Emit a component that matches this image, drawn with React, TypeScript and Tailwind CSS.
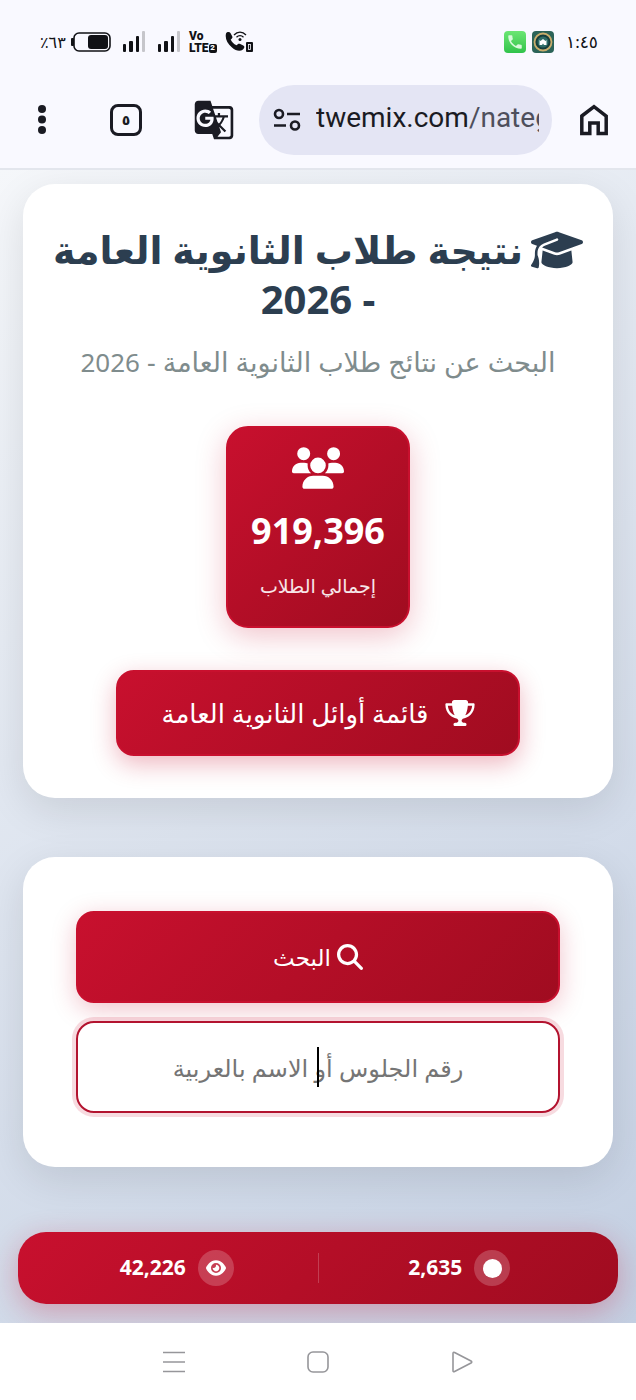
import { useState } from "react";
import { FaEye, FaGraduationCap, FaMagnifyingGlass, FaTrophy, FaUsers } from "react-icons/fa6";
import { MdGTranslate, MdPhone } from "react-icons/md";

const SignalBars = () => (
    <svg width="23" height="22" viewBox="0 0 23 22" aria-hidden="true">
        <rect x="0" y="13" width="3" height="8" rx="1" fill="#111216" />
        <rect x="6" y="10" width="4" height="11" rx="1" fill="#111216" />
        <rect x="13" y="5" width="3" height="16" rx="1" fill="#111216" />
        <rect x="19" y="0" width="3" height="21" rx="1" fill="#c6c6cb" />
    </svg>
);

const Battery = () => (
    <svg width="40" height="22" viewBox="0 0 40 22" aria-hidden="true">
        <rect x="0" y="7" width="3" height="8" rx="1" fill="#111216" />
        <rect x="3" y="2" width="36" height="18" rx="5" fill="none" stroke="#111216" strokeWidth="1.6" />
        <rect x="17" y="4" width="20" height="14" rx="3" fill="#111216" />
    </svg>
);

const WifiCall = () => (
    <svg width="28" height="22" viewBox="0 0 28 22" aria-hidden="true">
        <path d="M1 2.500C2 .8 4.600.6 5.600 2.200l1.700 3.200c.5 1.200-.1 1.900-1.600 3 1 2.400 3 4.500 5.800 5.900 1.200-1.500 2.100-1.900 3.200-1.500l3.600 1.700c1.500.8 1.500 2.200-.3 3.900C15 20.800 11 19.900 7 16.500 2 12.200-.1 7 1 2.500z" fill="#111216" />
        <path d="M9 4c3.500-3.800 8.500-3.800 12 0M11.500 6.200c2-2 5-2 7 0" fill="none" stroke="#111216" strokeWidth="1.300" />
        <circle cx="15" cy="8.500" r="1.500" fill="#111216" />
        <rect x="21" y="11" width="7" height="10" rx="1" fill="#111216" />
        <rect x="23.500" y="13.500" width="2" height="5" fill="none" stroke="#f9f9ff" strokeWidth=".8" />
    </svg>
);

const MosqueIcon = () => (
    <svg width="22" height="22" viewBox="0 0 22 22" aria-hidden="true">
        <rect width="22" height="22" rx="4" fill="#2b6358" />
        <circle cx="11" cy="11" r="8.500" fill="#173f3d" stroke="#c9ad6c" strokeWidth="1.800" />
        <circle cx="11" cy="11" r="5.500" fill="#2f6d68" />
        <path d="M7.500 14V9l1 1 2.500-2 2.500 2 1-1v5h-2.500l-1-1.500-1 1.500z" fill="#fff" />
    </svg>
);

const StatusBar = () => (
    <div className="flex h-[84px] items-center justify-between pl-10 pr-[38px] text-[#111216]" dir="ltr">
        <div className="flex items-center">
            <span className="w-[31px] whitespace-nowrap text-[16px]">٪٦٣</span>
            <Battery />
            <span className="ml-3"><SignalBars /></span>
            <span className="ml-3"><SignalBars /></span>
            <span className="ml-2 flex flex-col font-['Roboto',sans-serif] text-[12px] font-black leading-[12px]">
                <span>Vo</span>
                <span className="flex items-center">
                    LTE
                    <span className="flex h-[9px] w-2 items-center justify-center rounded-xs bg-[#111216] text-[8px] leading-none text-white">2</span>
                </span>
            </span>
            <span className="ml-2"><WifiCall /></span>
        </div>
        <div className="flex items-center">
            <span className="flex size-[22px] items-center justify-center rounded bg-linear-to-b from-[#6be673] to-[#2fc34b] text-[#d9f9dc]">
                <MdPhone size={18} />
            </span>
            <span className="ml-[6px]"><MosqueIcon /></span>
            <span className="ml-3 text-[17px]">١:٤٥</span>
        </div>
    </div>
);

const Toolbar = () => (
    <div className="flex h-[86px] items-center border-b-2 border-[#e3e6ed] px-[22px] pb-[13px] text-[#1a1b23]" dir="ltr">
        <button className="flex w-10 justify-center" aria-label="القائمة">
            <svg width="10" height="30" viewBox="0 0 10 30">
                <circle cx="5" cy="4" r="4" fill="currentColor" />
                <circle cx="5" cy="14.500" r="4" fill="currentColor" />
                <circle cx="5" cy="25" r="4" fill="currentColor" />
            </svg>
        </button>
        <button className="ml-11 flex w-10 justify-center" aria-label="علامات التبويب">
            <span className="flex size-8 items-center justify-center rounded-lg border-3 border-current text-[14px] font-bold">٥</span>
        </button>
        <button className="ml-12 flex w-10 justify-center" aria-label="ترجمة">
            <MdGTranslate size={42} className="shrink-0" />
        </button>
        <button className="ml-[25px] flex h-[70px] min-w-0 flex-1 items-center rounded-full bg-[#e4e5f4] pl-[14px] pr-[13px]">
            <svg width="28" height="24" viewBox="0 0 28 24" fill="none" stroke="currentColor" strokeWidth="2.600" className="shrink-0">
                <circle cx="6" cy="6" r="4" />
                <path d="M14 6h13M1 17.500h12" />
                <circle cx="22" cy="17.500" r="4" />
            </svg>
            <span className="ml-[15px] flex-1 overflow-hidden whitespace-nowrap pb-1 text-left font-['Roboto',sans-serif] text-[28px]">
                twemix.com<span className="text-[#4e4f5c]">/nateg</span>
            </span>
        </button>
        <button className="ml-[22px] flex w-10 justify-center" aria-label="الرئيسية">
            <svg width="30" height="32" viewBox="0 0 30 32" fill="none" stroke="currentColor" strokeWidth="3.500">
                <path d="M2.800 12 15 2.600 27.200 12v17.500h-8V19h-8.400v10.500h-8z" />
            </svg>
        </button>
    </div>
);

const HeaderCard = () => (
    <section className="rounded-[32px] bg-white px-6 pb-[42px] pt-[41px] text-center shadow-[0_12px_40px_rgba(0,0,0,0.1)]">
        <h1 className="text-[38px] font-bold leading-[49px] text-[#2c3e50]">
            <span className="flex items-center justify-center gap-2 whitespace-nowrap">
                <FaGraduationCap className="h-[42px] w-[52px] shrink-0" />
                نتيجة طلاب الثانوية العامة
            </span>
            <span className="block text-[40px]">- 2026</span>
        </h1>
        <p className="mt-[19px] whitespace-nowrap text-[27px] leading-10 text-[#7f8c8d]">
            البحث عن نتائج طلاب الثانوية العامة - <span className="text-[26px]">2026</span>
        </p>

        <div className="mx-auto mt-11 flex h-[202px] w-[184px] flex-col items-center rounded-[22px] border-2 border-[#c8102e] bg-linear-135 from-[#c8102e] to-[#a00c20] pt-[14px] text-white shadow-[0_8px_30px_rgba(200,16,46,0.25)]">
            <FaUsers size={52} />
            <strong className="mt-3 text-[36px] leading-[50px]">919,396</strong>
            <span className="mt-3 text-[19px] leading-9 text-white/90">إجمالي الطلاب</span>
        </div>

        <button className="mx-auto mt-[42px] flex h-[86px] w-[404px] max-w-full items-center justify-center gap-4 whitespace-nowrap rounded-[18px] border-2 border-[#c8102e] bg-linear-135 from-[#c8102e] to-[#a00c20] text-[26px] text-white shadow-[0_8px_24px_rgba(200,16,46,0.3)]">
            <FaTrophy className="h-[26px] w-[30px]" />
            قائمة أوائل الثانوية العامة
        </button>
    </section>
);

const SearchCard = () => {
    const [query, setQuery] = useState("");

    return (
        <form
            className="mt-[59px] flex flex-col gap-[18px] rounded-[32px] bg-white px-[53px] py-[54px] shadow-[0_12px_40px_rgba(0,0,0,0.1)]"
            onSubmit={(e) => e.preventDefault()}
        >
            <button className="flex h-[92px] items-center justify-center gap-[6px] rounded-[18px] border-2 border-[#c8102e] bg-linear-135 from-[#c8102e] to-[#a00c20] text-[23px] text-white shadow-[0_6px_24px_rgba(200,16,46,0.25)]">
                <FaMagnifyingGlass size={26} />
                البحث
            </button>
            <div className="relative">
                <input
                    className="block h-[92px] w-full rounded-[18px] border-2 border-[#b3132f] bg-white text-center text-[24px] caret-transparent shadow-[0_0_0_4px_rgba(200,16,46,0.15)] outline-none placeholder:text-[#757575]"
                    aria-label="رقم الجلوس أو الاسم بالعربية"
                    placeholder="رقم الجلوس أو الاسم بالعربية"
                    value={query}
                    onChange={(e) => setQuery(e.target.value)}
                />
                {!query && <span className="absolute inset-0 m-auto h-10 w-[2px] bg-black" />}
            </div>
        </form>
    );
};

const VisitorBar = () => (
    <div className="mx-[18px] mt-[65px] flex h-[72px] items-center rounded-[28px] bg-linear-135 from-[#c8102e] to-[#a00c20] px-[18px] text-[21px] font-bold text-white shadow-[0_8px_30px_rgba(200,16,46,0.3)]">
        <div className="flex flex-1 items-center justify-center gap-3">
            <span className="flex size-9 items-center justify-center rounded-full bg-white/20">
                <span className="size-[19px] rounded-full bg-white" />
            </span>
            2,635
        </div>
        <span className="h-[30px] w-px bg-white/20" />
        <div className="flex flex-1 items-center justify-center gap-3">
            <span className="flex size-9 items-center justify-center rounded-full bg-white/20">
                <FaEye size={20} />
            </span>
            42,226
        </div>
    </div>
);

const NavBar = () => (
    <nav className="flex h-[77px] items-center justify-center gap-[120px] bg-white text-[#96969a]" dir="ltr">
        <button aria-label="التطبيقات الأخيرة">
            <svg width="24" height="24" fill="none" stroke="currentColor" strokeWidth="1.600">
                <path d="M1 2.500h22M1 12h22M1 21.500h22" />
            </svg>
        </button>
        <button aria-label="الشاشة الرئيسية">
            <svg width="24" height="24" fill="none" stroke="currentColor" strokeWidth="1.600">
                <rect x="2" y="2" width="20" height="20" rx="5" />
            </svg>
        </button>
        <button aria-label="رجوع">
            <svg width="24" height="24" fill="none" stroke="currentColor" strokeWidth="1.600">
                <path d="M3 3.500v17q0 1.800 1.600 1L21 13q1.500-1 0-2L4.600 2.500Q3 1.700 3 3.500z" />
            </svg>
        </button>
    </nav>
);

export default function App() {
    return (
        <div className="bg-[#f9f9ff] font-['Noto_Sans','DejaVu_Sans',sans-serif]" dir="rtl" lang="ar">
            <header>
                <StatusBar />
                <Toolbar />
            </header>
            <main className="overflow-hidden bg-linear-145 from-[#f5f7fa] to-[#c3cfe2] pb-[19px] pt-[14px]">
                <div className="mx-[23px]">
                    <HeaderCard />
                    <SearchCard />
                </div>
                <VisitorBar />
            </main>
            <NavBar />
        </div>
    );
}
